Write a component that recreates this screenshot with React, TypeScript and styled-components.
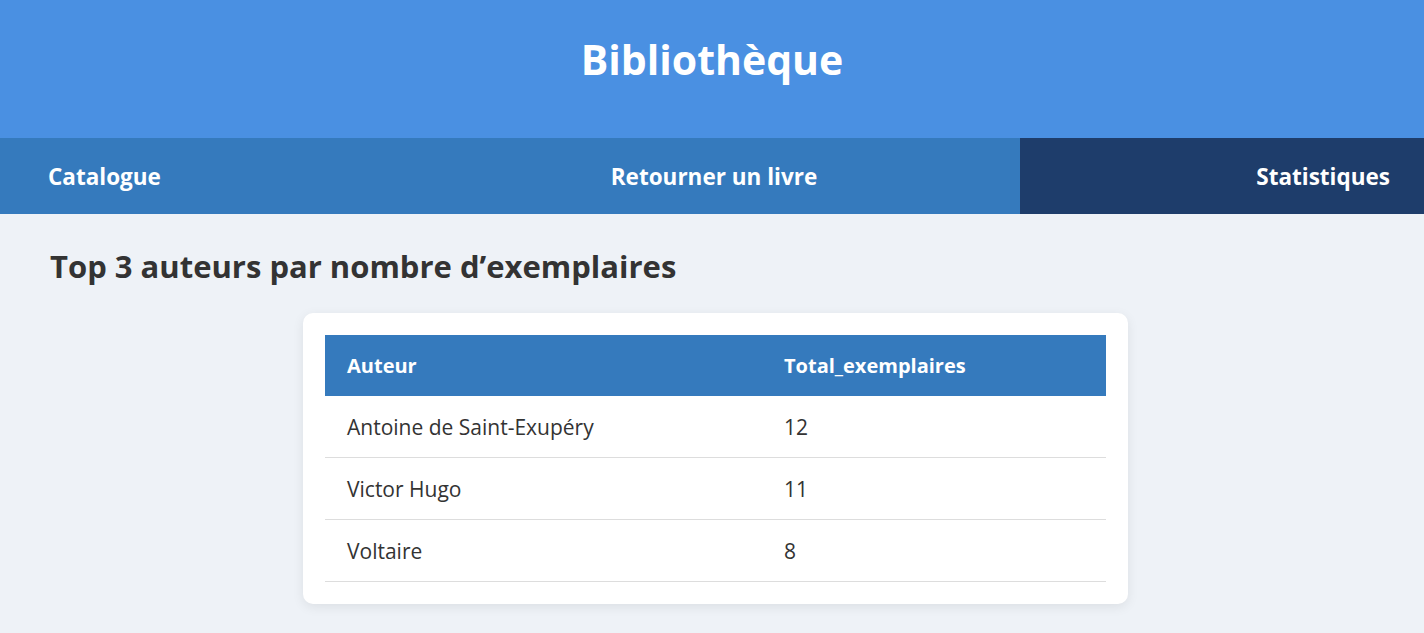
import React from "react";
import styled, { createGlobalStyle } from "styled-components";

const GlobalStyle = createGlobalStyle`
  html, body { margin: 0; padding: 0; }
  body {
    background: #eef2f7;
    font-family: "Open Sans", "Noto Sans", sans-serif;
    color: #333;
  }
`;

const Header = styled.header`
  background: #4a90e2;
  height: 138px;
  box-sizing: border-box;
  padding-top: 31px;
  display: flex;
  justify-content: center;
`;

const Title = styled.h1`
  margin: 0;
  color: #fff;
  font-size: 41px;
  line-height: 56px;
  font-weight: 700;
`;

const Nav = styled.nav`
  background: #357abd;
  height: 76px;
  display: grid;
  grid-template-columns: 408px 612px 1fr;
`;

const NavLink = styled.a<{ $align: "left" | "center" | "right"; $active?: boolean }>`
  display: flex;
  align-items: center;
  justify-content: ${(p) =>
    p.$align === "left" ? "flex-start" : p.$align === "center" ? "center" : "flex-end"};
  padding: 0 ${(p) => (p.$align === "right" ? "34px" : "0")} 0 ${(p) => (p.$align === "left" ? "48px" : "0")};
  background: ${(p) => (p.$active ? "#1e3d6b" : "transparent")};
  color: #fff;
  font-weight: 700;
  font-size: 22.5px;
  text-decoration: none;
`;

const Main = styled.main`
  padding: 31px 50px 30px;
`;

const Heading = styled.h2`
  margin: 0 0 26px;
  font-size: 31px;
  line-height: 42px;
  font-weight: 700;
  color: #333;
`;

const Card = styled.div`
  width: 825px;
  box-sizing: border-box;
  margin: 0 0 0 253px;
  background: #fff;
  border-radius: 10px;
  padding: 22px;
  box-shadow: 0 3px 12px rgba(0, 0, 0, 0.08);
`;

const Table = styled.table`
  width: 100%;
  border-collapse: collapse;
  table-layout: fixed;
`;

const Col = styled.col<{ $w?: string }>`
  width: ${(p) => p.$w || "auto"};
`;

const Th = styled.th`
  background: #357abd;
  color: #fff;
  font-weight: 700;
  font-size: 20px;
  text-align: left;
  height: 61px;
  padding: 0 22px;
`;

const Td = styled.td`
  font-size: 21px;
  color: #333;
  height: 61px;
  padding: 0 22px;
  border-bottom: 1px solid #ddd;
`;

const rows = [
  { auteur: "Antoine de Saint-Exupéry", total: 12 },
  { auteur: "Victor Hugo", total: 11 },
  { auteur: "Voltaire", total: 8 },
];

export default function App() {
  return (
    <>
      <GlobalStyle />
      <Header>
        <Title>Bibliothèque</Title>
      </Header>
      <Nav>
        <NavLink $align="left" href="#">Catalogue</NavLink>
        <NavLink $align="center" href="#">Retourner un livre</NavLink>
        <NavLink $align="right" $active href="#">Statistiques</NavLink>
      </Nav>
      <Main>
        <Heading>Top 3 auteurs par nombre d’exemplaires</Heading>
        <Card>
          <Table>
            <colgroup>
              <Col $w="437px" />
              <Col />
            </colgroup>
            <thead>
              <tr>
                <Th>Auteur</Th>
                <Th>Total_exemplaires</Th>
              </tr>
            </thead>
            <tbody>
              {rows.map((r) => (
                <tr key={r.auteur}>
                  <Td>{r.auteur}</Td>
                  <Td>{r.total}</Td>
                </tr>
              ))}
            </tbody>
          </Table>
        </Card>
      </Main>
    </>
  );
}
